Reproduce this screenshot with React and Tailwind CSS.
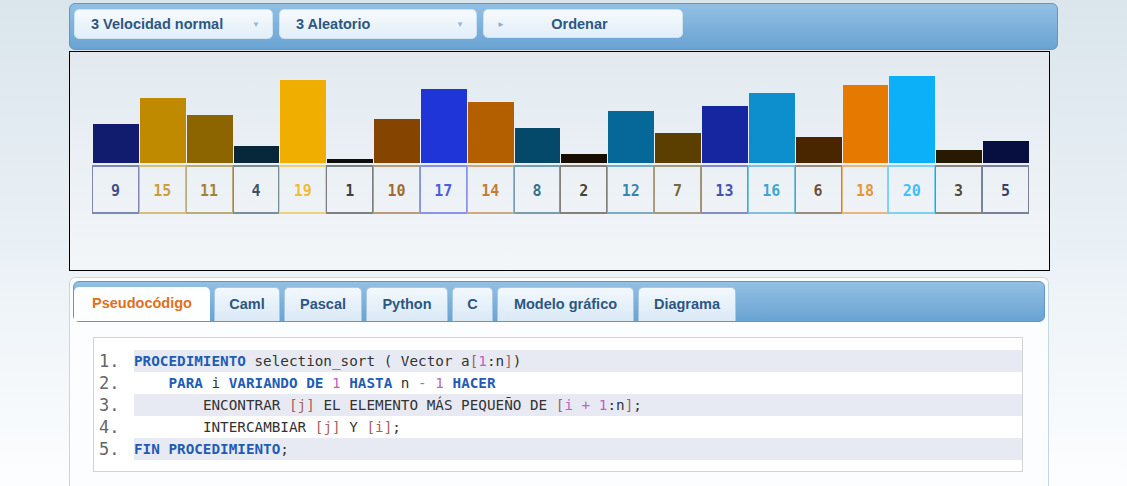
import React from "react";

const items = [
  [9, "#121c6e"], [15, "#c08a00"], [11, "#8c6400"], [4, "#06283a"], [19, "#f0ae00"],
  [1, "#0d0d0d"], [10, "#854500"], [17, "#2035d8"], [14, "#b35f00"], [8, "#04486a"],
  [2, "#1a0e00"], [12, "#066898"], [7, "#5a3f00"], [13, "#1526a0"], [16, "#0c8fcc"],
  [6, "#4a2600"], [18, "#e67a00"], [20, "#0bb0f8"], [3, "#281a00"], [5, "#060f40"],
];

const rgba = (hex, a) => {
  const n = parseInt(hex.slice(1), 16);
  return `rgba(${(n >> 16) & 255}, ${(n >> 8) & 255}, ${n & 255}, ${a})`;
};

const tabs = [
  ["Pseudocódigo", "w-[136px]"],
  ["Caml", "w-[66px]"],
  ["Pascal", "w-[78px]"],
  ["Python", "w-[82px]"],
  ["C", "w-[41px]"],
  ["Modelo gráfico", "w-[137px]"],
  ["Diagrama", "w-[98px]"],
];

const K = ({ children }) => <span className="font-bold text-[#1f5cb5]">{children}</span>;
const N = ({ children }) => <span className="text-[#c35fc0]">{children}</span>;
const B = ({ children }) => <span className="text-[#a5635d]">{children}</span>;

const lines = [
  <><K>PROCEDIMIENTO</K> selection_sort ( Vector a<B>[</B><N>1</N>:n<B>]</B>)</>,
  <>{"    "}<K>PARA</K> i <K>VARIANDO DE</K> <N>1</N> <K>HASTA</K> n <N>- 1</N> <K>HACER</K></>,
  <>{"        "}ENCONTRAR <B>[j]</B> EL ELEMENTO MÁS PEQUEÑO DE <B>[</B><N>i + 1</N>:n<B>]</B>;</>,
  <>{"        "}INTERCAMBIAR <B>[j]</B> Y <B>[i]</B>;</>,
  <><K>FIN PROCEDIMIENTO</K>;</>,
];

function Select({ label, width }) {
  return (
    <div className={`${width} h-[30px] flex items-center justify-between pl-4 pr-3 pt-[2px] rounded-[5px] border border-[#cfe2f2] bg-gradient-to-b from-[#f6fafd] to-[#e2eef8] text-[14.5px] font-bold text-[#2d5782]`}>
      <span>{label}</span>
      <span className="text-[8px] text-[#9db6cc]">▼</span>
    </div>
  );
}

export default function App() {
  return (
    <div className="min-h-[486px] bg-gradient-to-b from-[#dae5ec] via-[#eaf1f6] to-[#fdfeff] pt-[3px] pl-[69px] font-['Liberation_Sans',Arial,sans-serif]">
      <div className="w-[989px] h-[47px] rounded-[6px] border border-[#5f97c6] bg-gradient-to-b from-[#92c0e4] to-[#6aa3d2] flex gap-[6px] pl-1 pt-[5px]">
        <Select label="3 Velocidad normal" width="w-[199px]" />
        <Select label="3 Aleatorio" width="w-[198px]" />
        <div className="w-[200px] h-[29px] flex items-center pt-[2px] rounded-[5px] border border-[#cfe2f2] bg-gradient-to-b from-[#f6fafd] to-[#e2eef8] text-[14.5px] font-bold text-[#2d5782]">
          <span className="pl-[13px] text-[8px] text-[#8fb0cb]">►</span>
          <span className="flex-1 text-center pr-[28px]">Ordenar</span>
        </div>
      </div>

      <div className="w-[981px] h-[220px] mt-[1px] border border-black bg-gradient-to-b from-[#e2eaf0] to-[#f3f6f9] pl-[22px]">
        <div className="flex h-[111px] items-end">
          {items.map(([v, c], i) => (
            <div key={i} className="w-[46.85px] pl-[1px]">
              <div className="w-full" style={{ height: `${Math.round(v * 4.35)}px`, backgroundColor: c }} />
            </div>
          ))}
        </div>
        <div className="flex mt-[2px]">
          {items.map(([v, c], i) => (
            <div
              key={i}
              className="w-[46.85px] h-[49px] pt-[3px] border-x border-t-2 border-b-2 flex items-center justify-center font-['DejaVu_Sans_Mono',monospace] font-bold text-[15px]"
              style={{ borderColor: rgba(c, 0.5), color: rgba(c, 0.78) }}
            >
              {v}
            </div>
          ))}
        </div>
      </div>

      <div className="w-[980px] mt-[6px] h-[220px] rounded-t-[6px] border border-b-0 border-[#c3d8e6] bg-[#fcfdfe] pt-[3px] pl-[3px]">
        <div className="w-[972px] h-[41px] rounded-[6px] border border-[#5f97c6] bg-gradient-to-b from-[#92c0e4] to-[#6aa3d2] flex items-end gap-1">
          {tabs.map(([t, w], i) => (
            <div
              key={t}
              className={
                i === 0
                  ? `${w} h-[34px] rounded-t-[5px] bg-[#fdfefe] flex items-center justify-center text-[14.5px] font-bold text-[#e0701d]`
                  : `${w} h-[34px] rounded-t-[5px] border border-b-0 border-[#a9c9e3] bg-gradient-to-b from-[#f3f8fd] to-[#d9e9f6] flex items-center justify-center text-[14.5px] font-bold text-[#2d5782]`
              }
            >
              {t}
            </div>
          ))}
        </div>

        <div className="ml-[20px] mt-[15px] w-[930px] border border-[#d3d3d3] bg-white pt-[12px] pb-[11px] font-['DejaVu_Sans_Mono',monospace]">
          {lines.map((l, i) => (
            <div key={i} className="flex h-[22px]">
              <div className="w-[40px] pl-[5px] text-[17px] leading-[22px] text-[#666]">{i + 1}.</div>
              <div className={`flex-1 whitespace-pre text-[14.3px] leading-[22px] text-[#333] ${i % 2 === 0 ? "bg-[#e8eaf3]" : "bg-white"}`}>{l}</div>
            </div>
          ))}
        </div>
      </div>
    </div>
  );
}
